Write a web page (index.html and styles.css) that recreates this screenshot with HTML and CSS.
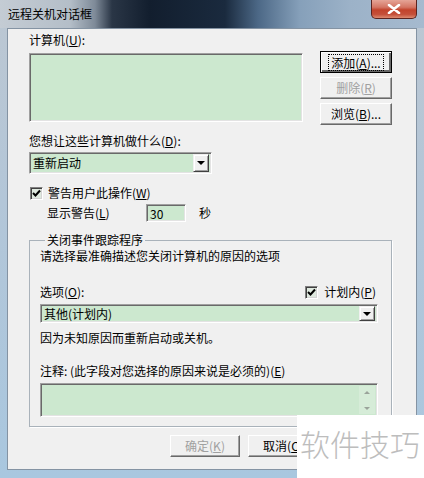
FILE: index.html
```html
<!DOCTYPE html>
<html lang="zh-CN">
<head>
<meta charset="utf-8">
<title>远程关机对话框</title>
<link rel="stylesheet" href="styles.css">
</head>
<body>
<div class="window">
  <div class="titlebar">
    <span class="title">远程关机对话框</span>
    <span class="close"><svg width="14" height="10" viewBox="0 0 14 10"><path d="M2 1 L12 9 M12 1 L2 9" stroke="#fff" stroke-width="2.6" stroke-linecap="round"/></svg></span>
  </div>
  <div class="client">
    <div class="top-row">
      <div class="left-col">
        <div class="line">计算机(<u>U</u>):</div>
        <div class="listbox sunken"></div>
      </div>
      <div class="btn-col">
        <div class="btn default"><span class="focus">添加(<u>A</u>)...</span></div>
        <div class="btn disabled">删除(<u>R</u>)</div>
        <div class="btn">浏览(<u>B</u>)...</div>
      </div>
    </div>
    <div class="line gap-q">您想让这些计算机做什么(<u>D</u>):</div>
    <div class="combo sunken combo-action"><span class="combo-text">重新启动</span><span class="arrow-btn"><span class="tri"></span></span></div>
    <div class="check-row">
      <span class="checkbox"><svg width="9" height="9" viewBox="0 0 9 9"><path d="M1 4 L3.5 6.5 L8 1.5" stroke="#000" stroke-width="2" fill="none"/></svg></span>
      <span class="line">警告用户此操作(<u>W</u>)</span>
    </div>
    <div class="warn-row">
      <span class="line warn-label">显示警告(<u>L</u>)</span>
      <span class="num sunken">30</span>
      <span class="line sec">秒</span>
    </div>
    <fieldset class="group">
      <legend class="line">关闭事件跟踪程序</legend>
      <div class="line">请选择最准确描述您关闭计算机的原因的选项</div>
      <div class="opt-row">
        <span class="line">选项(<u>O</u>):</span>
        <span class="plan"><span class="checkbox"><svg width="9" height="9" viewBox="0 0 9 9"><path d="M1 4 L3.5 6.5 L8 1.5" stroke="#000" stroke-width="2" fill="none"/></svg></span><span class="line">计划内(<u>P</u>)</span></span>
      </div>
      <div class="combo sunken combo-reason"><span class="combo-text">其他(计划内)</span><span class="arrow-btn small"><span class="tri"></span></span></div>
      <div class="line gap-why">因为未知原因而重新启动或关机。</div>
      <div class="line gap-note">注释: (此字段对您选择的原因来说是必须的)(<u>E</u>)</div>
      <div class="memo sunken">
        <div class="memo-body"></div>
        <div class="vscroll"><span class="up"></span><span class="down"></span></div>
      </div>
    </fieldset>
    <div class="bottom-row">
      <div class="btn disabled wide">确定(<u>K</u>)</div>
      <div class="btn wide">取消(<u>C</u>)</div>
    </div>
  </div>
  <div class="watermark">软件技巧</div>
</div>
</body>
</html>
```

FILE: styles.css
```css
* { box-sizing: border-box; }
html, body { margin: 0; padding: 0; }
body {
  width: 424px;
  height: 478px;
  overflow: hidden;
  font-family: "Noto Sans CJK SC", "Liberation Sans", sans-serif;
  font-size: 12px;
  color: #000;
}
u { text-decoration: underline; text-underline-offset: 1px; }
.window {
  position: relative;
  width: 424px;
  height: 478px;
  background: linear-gradient(180deg, #bcc7d2 0, #b3c6d8 200px, #a9c7df 478px);
  display: flex;
  flex-direction: column;
}
.titlebar {
  height: 28px;
  display: flex;
  justify-content: space-between;
  align-items: flex-start;
  background: linear-gradient(90deg, #c4ccd4 0, #b4bec8 70px, #7e8a98 95px, #2a3646 112px, #121e2e 150px, #1a2a3e 225px, #4c6886 258px, #86a0ba 300px, #9cb2c8 350px, #a6bacf 424px);
  padding-left: 8px;
}
.title {
  line-height: 28px;
  font-size: 12px;
  color: #000;
}
.close {
  width: 46px;
  height: 19px;
  margin-right: 7px;
  border: 1px solid #5b2420;
  border-top: 0;
  border-radius: 0 0 5px 5px;
  background: linear-gradient(180deg, #e5a597 0, #d47664 40%, #c2432c 55%, #c5503a 80%, #dd8a70 100%);
  display: flex;
  align-items: center;
  justify-content: center;
}
.client {
  height: 442px;
  margin: 0 7px 0 7px;
  width: 410px;
  background: #f0f0f0;
  border: 1px solid #8493a3;
  padding: 4px 0 0 21px;
  display: flex;
  flex-direction: column;
  align-items: flex-start;
}
.line { line-height: 14px; white-space: nowrap; }
.sunken {
  border-top: 1px solid #a0a0a0;
  border-left: 1px solid #a0a0a0;
  border-right: 1px solid #fff;
  border-bottom: 1px solid #fff;
  box-shadow: inset 1px 1px 0 #696969, inset -1px -1px 0 #e3e3e3;
  background: #cce8cf;
}
.top-row { display: flex; }
.left-col { width: 274px; display: flex; flex-direction: column; }
.listbox { margin-top: 6px; height: 69px; width: 274px; }
.btn-col {
  margin-left: 17px;
  margin-top: 18px;
  display: flex;
  flex-direction: column;
  gap: 4px;
}
.btn {
  width: 72px;
  height: 22px;
  background: #f0f0f0;
  border-top: 1px solid #fff;
  border-left: 1px solid #fff;
  border-right: 1px solid #696969;
  border-bottom: 1px solid #696969;
  box-shadow: inset -1px -1px 0 #a0a0a0;
  display: flex;
  align-items: center;
  justify-content: center;
  line-height: 14px;
  white-space: nowrap;
}
.btn.default {
  border: 1px solid #000;
  box-shadow: inset 1px 1px 0 #fff, inset -2px -2px 0 #696969;
}
.focus {
  border: 1px dotted #000;
  padding: 1px 2px;
  line-height: 13px;
}
.btn.disabled { color: #a0a0a0; }
.gap-q { margin-top: 9px; }
.combo {
  margin-top: 4px;
  display: flex;
  align-items: center;
  justify-content: space-between;
  padding: 2px 2px 2px 3px;
}
.combo-action { width: 183px; height: 22px; }
.combo-text { line-height: 14px; white-space: nowrap; }
.arrow-btn {
  width: 16px;
  height: 18px;
  background: #f0f0f0;
  border-top: 1px solid #f0f0f0;
  border-left: 1px solid #f0f0f0;
  border-right: 1px solid #404040;
  border-bottom: 1px solid #404040;
  box-shadow: inset 1px 1px 0 #fff, inset -1px -1px 0 #a0a0a0;
  display: flex;
  align-items: center;
  justify-content: center;
}
.arrow-btn.small { height: 15px; }
.tri {
  width: 0; height: 0;
  border-left: 4px solid transparent;
  border-right: 4px solid transparent;
  border-top: 4px solid #000;
}
.check-row {
  margin-top: 12px;
  display: flex;
  align-items: center;
  gap: 5px;
  padding-left: 1px;
}
.checkbox {
  width: 13px;
  height: 13px;
  border-top: 1px solid #808080;
  border-left: 1px solid #808080;
  border-right: 1px solid #fff;
  border-bottom: 1px solid #fff;
  box-shadow: inset 1px 1px 0 #404040, inset -1px -1px 0 #d4d4d4;
  background: #dfe9df;
  display: flex;
  align-items: center;
  justify-content: center;
}
.warn-row {
  margin-top: 4px;
  display: flex;
  align-items: center;
  padding-left: 18px;
}
.warn-label { width: 99px; }
.num {
  width: 40px;
  height: 18px;
  line-height: 14px;
  padding: 2px 3px;
}
.sec { margin-left: 13px; }
.group {
  margin: 11px 0 0 0;
  width: 363px;
  border: 1px solid #a9b2ba;
  box-shadow: 1px 1px 0 #fff;
  padding: 2px 13px 9px 10px;
  min-width: 0;
}
.group legend {
  padding: 0 2px;
  margin-left: 5px;
}
.opt-row {
  margin-top: 22px;
  display: flex;
  justify-content: space-between;
  align-items: center;
  width: 338px;
}
.plan {
  display: flex;
  align-items: center;
  gap: 6px;
  padding-right: 2px;
}
.combo-reason {
  width: 338px;
  height: 19px;
  margin-top: 5px;
  padding: 1px 2px 1px 3px;
}
.gap-why { margin-top: 8px; }
.gap-note { margin-top: 19px; }
.memo {
  margin-top: 5px;
  width: 338px;
  height: 34px;
  display: flex;
  padding: 2px 2px 2px 2px;
}
.memo-body { flex: 1; }
.vscroll {
  width: 16px;
  display: flex;
  flex-direction: column;
  justify-content: space-between;
  align-items: center;
  padding: 5px 0 4px;
  background: #d6ecd8;
}
.up, .down {
  width: 0; height: 0;
  border-left: 3px solid transparent;
  border-right: 3px solid transparent;
}
.up { border-bottom: 3px solid #9aa39a; }
.down { border-top: 3px solid #9aa39a; }
.bottom-row {
  margin-top: 8px;
  margin-left: 141px;
  display: flex;
  gap: 8px;
}
.btn.wide { width: 70px; }
.watermark {
  position: absolute;
  left: 297px;
  top: 415px;
  width: 127px;
  height: 63px;
  background: #fff;
  color: #bdbdbd;
  font-size: 30px;
  line-height: 56px;
  padding-left: 3px;
  white-space: nowrap;
  font-weight: 300;
}
```
